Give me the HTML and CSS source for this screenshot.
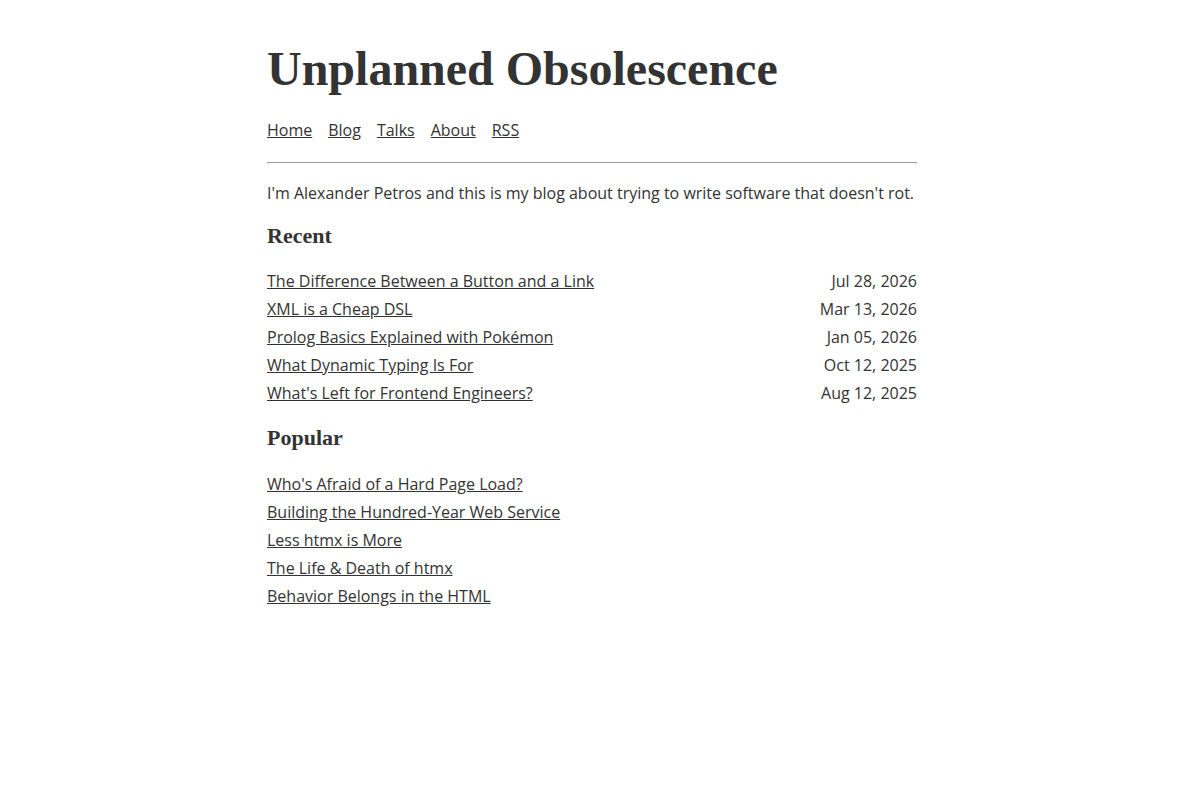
FILE: index.html
```html
<!DOCTYPE html>
<html lang="en">
<head>
<meta charset="utf-8">
<title>Unplanned Obsolescence</title>
<link rel="stylesheet" href="styles.css">
</head>
<body>
<div class="page">
  <header class="site-header">
    <h1 class="site-title">Unplanned Obsolescence</h1>
    <nav class="site-nav">
      <a href="#">Home</a>
      <a href="#">Blog</a>
      <a href="#">Talks</a>
      <a href="#">About</a>
      <a href="#">RSS</a>
    </nav>
  </header>
  <hr class="rule">
  <main>
    <p class="intro">I'm Alexander Petros and this is my blog about trying to write software that doesn't rot.</p>

    <h2 class="section-title">Recent</h2>
    <ul class="post-list">
      <li class="post-row"><a href="#">The Difference Between a Button and a Link</a><time>Jul 28, 2026</time></li>
      <li class="post-row"><a href="#">XML is a Cheap DSL</a><time>Mar 13, 2026</time></li>
      <li class="post-row"><a href="#">Prolog Basics Explained with Pokémon</a><time>Jan 05, 2026</time></li>
      <li class="post-row"><a href="#">What Dynamic Typing Is For</a><time>Oct 12, 2025</time></li>
      <li class="post-row"><a href="#">What's Left for Frontend Engineers?</a><time>Aug 12, 2025</time></li>
    </ul>

    <h2 class="section-title">Popular</h2>
    <ul class="post-list post-list-plain">
      <li class="post-row"><a href="#">Who's Afraid of a Hard Page Load?</a></li>
      <li class="post-row"><a href="#">Building the Hundred-Year Web Service</a></li>
      <li class="post-row"><a href="#">Less htmx is More</a></li>
      <li class="post-row"><a href="#">The Life &amp; Death of htmx</a></li>
      <li class="post-row"><a href="#">Behavior Belongs in the HTML</a></li>
    </ul>
  </main>
</div>
</body>
</html>
```

FILE: styles.css
```css
html, body {
  margin: 0;
  padding: 0;
  background: #fff;
}

body {
  color: #333;
  font-family: "Open Sans", "Liberation Sans", sans-serif;
  font-size: 16px;
  line-height: 28px;
}

.page {
  width: 650px;
  padding-right: 16px;
  margin: 0 auto;
  padding-top: 40px;
}

a {
  color: #333;
  text-decoration: underline;
}

.site-title {
  font-family: "Liberation Serif", "Times New Roman", serif;
  font-weight: bold;
  font-size: 48px;
  line-height: 58px;
  margin: 0;
}

.site-nav {
  display: flex;
  gap: 16px;
  margin-top: 18px;
}

.rule {
  border: 0;
  border-top: 1px solid #999;
  margin: 18px 0 16px;
}

.intro {
  margin: 0;
}

.section-title {
  font-family: "Liberation Serif", "Times New Roman", serif;
  font-weight: bold;
  font-size: 22px;
  line-height: 28px;
  margin: 15px 0 16.5px;
}

.post-list {
  list-style: none;
  margin: 0;
  padding: 0 0 2px;
}

.post-list-plain {
  padding-top: 2px;
}

.post-row {
  display: flex;
  justify-content: space-between;
}
```
